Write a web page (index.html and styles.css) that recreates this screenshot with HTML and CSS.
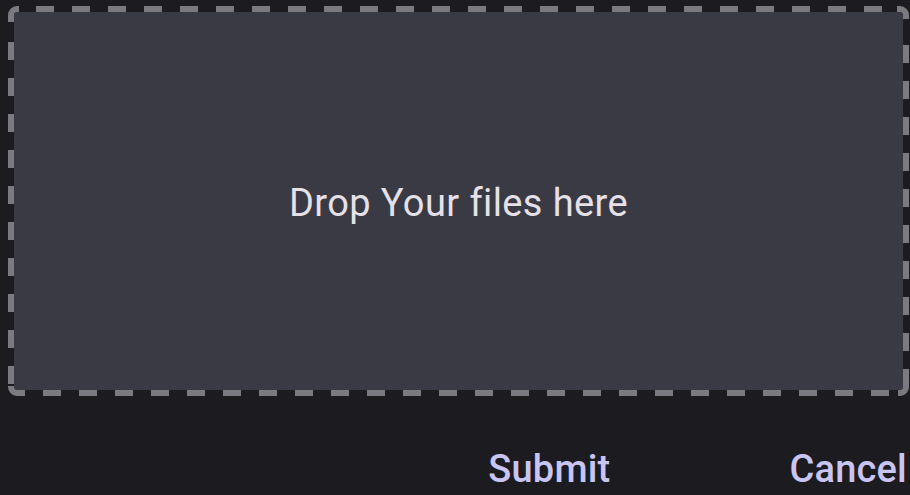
FILE: index.html
```html
<!DOCTYPE html>
<html>
<head>
<meta charset="utf-8">
<link rel="stylesheet" href="styles.css">
</head>
<body>
<div class="dropzone">
  <svg class="dash-frame" viewBox="0 0 901 390" width="901" height="390" aria-hidden="true">
    <g fill="none" stroke="#7b7a80" stroke-width="6">
      <line x1="28" y1="3" x2="874" y2="3" stroke-dasharray="18 18"/>
      <line x1="3" y1="36" x2="3" y2="378" stroke-dasharray="18 18"/>
      <line x1="35" y1="387" x2="883" y2="387" stroke-dasharray="18 18"/>
      <line x1="898" y1="39" x2="898" y2="381" stroke-dasharray="18 18"/>
      <path d="M3 16 L3 9 A6 6 0 0 1 9 3 L11 3"/>
      <path d="M889 3 L892 3 A6 6 0 0 1 898 9 L898 13"/>
      <path d="M3 380 L3 381 A6 6 0 0 0 9 387 L17 387"/>
      <path d="M890 387 L892 387 A6 6 0 0 0 898 381 L898 380"/>
    </g>
  </svg>
  <span class="drop-text">Drop Your files here</span>
</div>
<div class="actions">
  <button class="btn">Submit</button>
  <button class="btn">Cancel</button>
</div>
</body>
</html>
```

FILE: styles.css
```css
html, body {
  margin: 0;
  padding: 0;
  background: #1c1b20;
}
body {
  padding: 6px 1px 0 8px;
  font-family: Roboto, "Noto Sans", sans-serif;
  height: 495px;
  box-sizing: border-box;
  overflow: hidden;
}
.dropzone {
  position: relative;
  height: 390px;
  box-sizing: border-box;
  border: 6px solid transparent;
  border-radius: 9px;
  background: #393a43;
  background-clip: padding-box;
  display: flex;
  align-items: center;
  justify-content: center;
}
.dash-frame {
  position: absolute;
  top: -6px;
  left: -6px;
  display: block;
}
.drop-text {
  color: #e6e1e8;
  font-size: 38px;
  font-weight: 400;
  letter-spacing: 0.4px;
  margin-top: 4px;
}
.actions {
  display: flex;
  justify-content: flex-end;
  margin-right: 2px;
  margin-top: 51px;
  gap: 179px;
}
.btn {
  background: none;
  border: none;
  padding: 0;
  font-family: Roboto, "Noto Sans", sans-serif;
  font-size: 38px;
  font-weight: 500;
  color: #c9c5f3;
  line-height: 44px;
  letter-spacing: 0.2px;
}
```
